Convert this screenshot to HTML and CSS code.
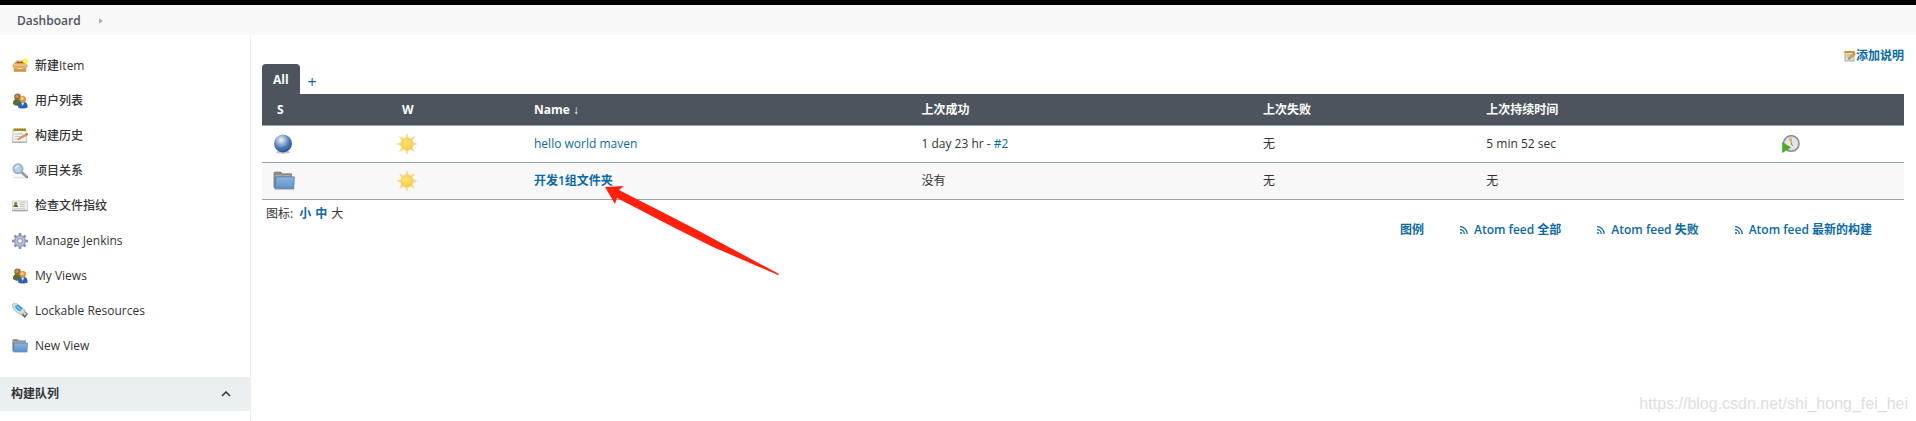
FILE: index.html
```html
<!DOCTYPE html>
<html lang="zh-CN">
<head>
  <meta charset="UTF-8" />
  <meta name="viewport" content="width=device-width, initial-scale=1" />
  <title>Dashboard [Jenkins]</title>
  <link rel="stylesheet" href="styles.css">
</head>
<body>

  <!-- Shared icons -->
  <svg class="sprite" aria-hidden="true">
    <defs>
      <linearGradient id="boxFill" x1="0" y1="0" x2="0" y2="1">
        <stop offset="0" stop-color="#f6cf8d" /><stop offset="1" stop-color="#d4883a" />
      </linearGradient>
      <linearGradient id="folderFill" x1="0" y1="0" x2="0" y2="1">
        <stop offset="0" stop-color="#8db4de" /><stop offset="1" stop-color="#5c8fc9" />
      </linearGradient>
      <radialGradient id="ballFill" cx="0.4" cy="0.3" r="0.7">
        <stop offset="0" stop-color="#f2f5ee" /><stop offset="0.3" stop-color="#a5bdd8" />
        <stop offset="0.65" stop-color="#4a79b5" /><stop offset="1" stop-color="#2a5592" />
      </radialGradient>
      <radialGradient id="sunFill" cx="0.45" cy="0.4" r="0.6">
        <stop offset="0" stop-color="#ffe680" /><stop offset="1" stop-color="#fccb3c" />
      </radialGradient>
    </defs>
    <symbol id="icon-box" viewBox="0 0 16 16">
      <path d="M2.500 5.500 4.500 3h7l2 2.500z" fill="#e5ae62" stroke="#c07a2c" stroke-width=".6" />
      <path d="M4 5.200h8L11 4H5z" fill="#9c6428" />
      <path d="M2 6.500h12V13.500H2z" fill="url(#boxFill)" stroke="#d09450" stroke-width=".6" />
      <path d="M.3 8.500 2.300 5.500h11.400l2 3z" fill="#f0bd7c" stroke="#cf8d42" stroke-width=".5" />
      <path d="M6 10.500h4" stroke="#fbe2b5" stroke-width="1" />
      <circle cx="13.500" cy="3" r="2.500" fill="#fff226" />
      <circle cx="13.500" cy="3" r="1" fill="#fffcb8" />
    </symbol>
    <symbol id="icon-users" viewBox="0 0 16 16">
      <path d="M1 11c-.4-3 1-5 4-5s5 2 4.500 6C7 13.200 3 13 1 11z" fill="#55702b" />
      <circle cx="5.500" cy="3.800" r="3.300" fill="#9a6732" />
      <circle cx="5" cy="3.200" r="1.700" fill="#c39359" />
      <path d="M6.200 14.500c-.4-4 1-5.700 4.300-5.700s5.500 1.700 5 5.700c-2.500 1.300-7 1.300-9.300 0z" fill="#2e62ab" />
      <path d="m9.200 9.500 1.500 3.500 1.500-3.500z" fill="#e7eef8" />
      <circle cx="10.800" cy="6.300" r="3.200" fill="#e0933b" />
      <circle cx="10.200" cy="5.600" r="1.700" fill="#f6c686" />
    </symbol>
    <symbol id="icon-notepad" viewBox="0 0 16 16">
      <path d="M1 2h13l.8 12.500H.5z" fill="#f0f0ed" stroke="#b4b5b0" stroke-width=".7" />
      <path d="M.5 13.500h14.300v1.500H.5z" fill="#b2b3af" />
      <path d="M1.500.5h12.500v2.500H1.500z" fill="#a99330" />
      <path d="M2.500 1.200h1m1.500 0h1m1.500 0h1m1.500 0h1m1.500 0h1" stroke="#645315" stroke-width=".8" />
      <path d="M3 6h8M3 8.500h5M3 11h3" stroke="#b9bbb7" stroke-width=".8" />
      <path d="m6 11.500 1.400-2L14 6l1.700-.3-.6 1.600-6.600 3.500z" fill="#dc924a" stroke="#9b5b27" stroke-width=".3" />
      <path d="m14 6 1.700-.5-.5 2z" fill="#bd3232" />
      <path d="m5.800 11.800.6-1 .6.800z" fill="#333" />
    </symbol>
    <symbol id="icon-search" viewBox="0 0 16 16">
      <ellipse cx="7.500" cy="14.500" rx="6.500" ry="1" fill="#e6e6e6" />
      <path d="m10 9.500 5 4.500" stroke="#858988" stroke-width="2.600" stroke-linecap="round" />
      <path d="m10.500 9.300 4.700 4" stroke="#c0c3c1" stroke-width="1" />
      <circle cx="6" cy="5.800" r="4.900" fill="#bdd8f3" stroke="#a9aeb2" stroke-width="1.300" />
      <circle cx="6" cy="5.800" r="3.900" fill="#b5d2f0" stroke="#7facd9" stroke-width=".6" />
      <path d="M3.500 5.500c.3-1.800 1.500-2.600 3.300-2.500" fill="none" stroke="#eef6ff" stroke-width="1.400" />
    </symbol>
    <symbol id="icon-card" viewBox="0 0 16 16">
      <path d="M.5 3h15v10H.5z" fill="#efefed" stroke="#c8cac6" stroke-width=".8" />
      <path d="M.5 12.600h15" stroke="#9b9d99" stroke-width="1" />
      <path d="M1.500 9c0-2 1-2.500 2.200-2.500S6 7 6 9z" fill="#55702b" />
      <circle cx="3.700" cy="5.500" r="1.500" fill="#b56d27" />
      <path d="M8 4.800h5.500M8 6.700h4.500M8 8.500h5M2 10.800h11.500" stroke="#b5b6b3" stroke-width=".7" />
    </symbol>
    <symbol id="icon-gear" viewBox="0 0 16 16">
      <g stroke="#8792b8" stroke-width="2.600">
        <path d="M8 0v16M0 8h16M2.500 2.500l11 11M13.500 2.500l-11 11" />
      </g>
      <circle cx="8" cy="8" r="5.600" fill="#a7b1d0" stroke="#7f8bb3" stroke-width=".6" />
      <circle cx="8" cy="8" r="3.900" fill="none" stroke="#bdc5de" stroke-width="1" />
      <circle cx="8" cy="8" r="2.300" fill="#fff" stroke="#7883a8" stroke-width=".7" />
    </symbol>
    <symbol id="icon-usb" viewBox="0 0 16 16">
      <path d="m8.800 11 3.200-3.600 4 3.400-3.200 4.200z" fill="#5c6062" />
      <path d="m10.500 10.500 1.800-1.900 2.400 1.900-1.700 2.200z" fill="#cfd3d4" />
      <path d="M.2 1.800C.8.300 3-.2 4.500.4l8.300 6.200c.8 1-1.700 5-3.700 5.100C5.500 11 0 5 .2 1.800z" fill="#d4dbdf" stroke="#929b9f" stroke-width=".6" />
      <path d="M3.200 3.200c1-1.700 2.800-1.900 3.800-1.100l3 2.700c.7 1-.9 3.600-2.400 3.300C6 7.500 2.700 5 3.200 3.200z" fill="#35a8da" />
      <path d="m4.800 3.500 3.500 2.800" stroke="#a4e3fa" stroke-width="1" />
    </symbol>
    <symbol id="icon-folder" viewBox="0 0 16 16">
      <path d="M.7 2.200 1.200 1.500h4.500l1 1.200h6.800v10H.7z" fill="#8b8d88" stroke="#737570" stroke-width=".5" />
      <path d="M1.300 3.500h11.500V5H1.300z" fill="#a6a8a3" />
      <path d="M2.200 5h13.300l-.5 9H1.500z" fill="url(#folderFill)" stroke="#4879b2" stroke-width=".6" />
      <path d="M.7 14.300h14.800" stroke="#d2d4d2" stroke-width=".7" />
    </symbol>
    <symbol id="icon-ball" viewBox="0 0 20 20">
      <ellipse cx="10" cy="18.200" rx="7" ry="1.600" fill="#c2c5c9" />
      <circle cx="10" cy="9.500" r="9" fill="url(#ballFill)" />
    </symbol>
    <symbol id="icon-sun" viewBox="0 0 22 22">
      <path d="m11 0 2 6H9zM11 22l2-6H9zM0 11l6-2v4zM22 11l-6-2v4zM3 3l6 3-3 3zM19 3l-6 3 3 3zM3 19l6-3-3-3zM19 19l-6-3 3-3z" fill="#fbd88c" />
      <circle cx="11" cy="11" r="6" fill="url(#sunFill)" stroke="#fac64b" stroke-width=".6" />
    </symbol>
    <symbol id="icon-clock" viewBox="0 0 18 18">
      <circle cx="9.300" cy="8.500" r="7.800" fill="#e6e6e4" stroke="#8584a5" stroke-width="1.500" />
      <circle cx="9.300" cy="8.500" r="6.500" fill="none" stroke="#c8c8ca" stroke-width=".8" />
      <path d="m6.500 4 3-1.500.9 5.500-2-1.500z" fill="#e0b238" />
      <path d="m9 7.500 1.500 3.500" stroke="#777" stroke-width="1" />
      <path d="M.5 7.500 8.500 12.500.5 17.500z" fill="#4dae20" stroke="#4a9a26" stroke-width=".6" />
    </symbol>
    <symbol id="icon-edit" viewBox="0 0 12 12">
      <path d="M1 1.500h9v9.500H1z" fill="#dededa" stroke="#90918c" stroke-width=".7" />
      <path d="M.5 1h10v2H.5z" fill="#c49a25" />
      <path d="M2.500 5h5M2.500 7h3" stroke="#a0a19d" stroke-width=".7" />
      <path d="m4.300 9.300.9-2L10 2.700l1.500 1.400-5 4.400z" fill="#eda937" stroke="#87551b" stroke-width=".5" />
    </symbol>
    <symbol id="icon-feed" viewBox="0 0 8 8">
      <path d="M0 .7A7.300 7.300 0 0 1 7.300 8M0 3.700A4.300 4.300 0 0 1 4.300 8" fill="none" stroke="currentColor" stroke-width="1.300" />
      <circle cx="1" cy="7" r="1" fill="currentColor" />
    </symbol>
  </svg>

  <header class="page-header"></header>

  <nav class="breadcrumbs">
    <a href="#">Dashboard</a>
    <svg class="breadcrumb-arrow" viewBox="0 0 4 6"><path d="M0 0l4 3-4 3z" fill="#b3b3b3" /></svg>
  </nav>

  <div class="page-body">
    <aside class="side-panel">
      <nav class="tasks">
        <a href="#"><svg><use href="#icon-box" /></svg>新建Item</a>
        <a href="#"><svg><use href="#icon-users" /></svg>用户列表</a>
        <a href="#"><svg><use href="#icon-notepad" /></svg>构建历史</a>
        <a href="#"><svg><use href="#icon-search" /></svg>项目关系</a>
        <a href="#"><svg><use href="#icon-card" /></svg>检查文件指纹</a>
        <a href="#"><svg><use href="#icon-gear" /></svg>Manage Jenkins</a>
        <a href="#"><svg><use href="#icon-users" /></svg>My Views</a>
        <a href="#"><svg><use href="#icon-usb" /></svg>Lockable Resources</a>
        <a href="#"><svg><use href="#icon-folder" /></svg>New View</a>
      </nav>
      <div class="pane-header">
        <span>构建队列</span>
        <button type="button" class="collapse" aria-label="collapse">
          <svg viewBox="0 0 10 6"><path d="M1 5l4-4 4 4" fill="none" stroke="#333" stroke-width="1.500" /></svg>
        </button>
      </div>
    </aside>

    <main class="main-panel">
      <div class="description">
        <a href="#"><svg><use href="#icon-edit" /></svg>添加说明</a>
      </div>

      <div class="tab-bar">
        <a href="#" class="tab active">All</a>
        <a href="#" class="tab add">+</a>
      </div>

      <table class="projects">
        <colgroup>
          <col class="col-status" />
          <col class="col-weather" />
          <col class="col-name" />
          <col class="col-success" />
          <col class="col-failure" />
          <col class="col-duration" />
          <col class="col-build" />
        </colgroup>
        <thead>
          <tr>
            <th><a href="#">S</a></th>
            <th><a href="#">W</a></th>
            <th><a href="#">Name <span class="sort">↓</span></a></th>
            <th><a href="#">上次成功</a></th>
            <th><a href="#">上次失败</a></th>
            <th><a href="#">上次持续时间</a></th>
            <th></th>
          </tr>
        </thead>
        <tbody>
          <tr>
            <td><svg class="status"><use href="#icon-ball" /></svg></td>
            <td><svg class="weather"><use href="#icon-sun" /></svg></td>
            <td><a href="#" class="job">hello world maven</a></td>
            <td>1 day 23 hr - <a href="#" class="job">#2</a></td>
            <td>无</td>
            <td>5 min 52 sec</td>
            <td><a href="#" aria-label="build"><svg class="build"><use href="#icon-clock" /></svg></a></td>
          </tr>
          <tr>
            <td><svg class="status folder-icon"><use href="#icon-folder" /></svg></td>
            <td><svg class="weather"><use href="#icon-sun" /></svg></td>
            <td><a href="#" class="folder">开发1组文件夹</a></td>
            <td>没有</td>
            <td>无</td>
            <td>无</td>
            <td></td>
          </tr>
        </tbody>
      </table>

      <div class="icon-size"><span>图标:</span><a href="#">小</a><a href="#">中</a><span>大</span></div>

      <div class="feeds">
        <a href="#">图例</a>
        <a href="#"><svg><use href="#icon-feed" /></svg>Atom feed 全部</a>
        <a href="#"><svg><use href="#icon-feed" /></svg>Atom feed 失败</a>
        <a href="#"><svg><use href="#icon-feed" /></svg>Atom feed 最新的构建</a>
      </div>
    </main>
  </div>

  <!-- Annotation over the table -->
  <svg class="pointer" viewBox="0 0 174 88">
    <path d="M0 0 19-1 14 3 65 29 94 44 174 87 173 88 108 60 68 40 12 11 10 17z" fill="#ff2010" />
  </svg>

  <div class="watermark">https://blog.csdn.net/shi_hong_fei_hei</div>

</body>
</html>
```
FILE: styles.css
```css
* {
  box-sizing: border-box;
}
body {
  margin: 0;
  min-height: 100vh;
  display: flex;
  flex-direction: column;
  position: relative;
  overflow: hidden;
  background: #fff;
  color: #333;
  font-family: "Open Sans", "Noto Sans CJK SC", sans-serif;
  font-size: 12px;
  line-height: 18px;
}
a {
  color: #0b6aa2;
  text-decoration: none;
}
svg {
  display: block;
  flex: none;
}
.sprite {
  position: absolute;
  width: 0;
  height: 0;
}
.page-header {
  height: 5px;
  background: #000;
}
.breadcrumbs {
  display: flex;
  align-items: center;
  gap: 18px;
  height: 30px;
  padding: 1px 17px 0;
  background: #f8f8f8;
}
.breadcrumbs a {
  color: #4d545d;
  font-weight: 600;
}
.breadcrumb-arrow {
  width: 4px;
  height: 6px;
}
.page-body {
  display: flex;
  flex: 1;
}

/* Side panel */
.side-panel {
  width: 251px;
  flex: none;
  border-right: 1px solid #eaeff2;
}
.tasks {
  padding: 13px 12px 14px;
}
.tasks a {
  display: flex;
  align-items: center;
  gap: 7px;
  height: 35px;
  color: #333;
  font-weight: 500;
}
.tasks svg {
  width: 16px;
  height: 16px;
}
.pane-header {
  display: flex;
  align-items: center;
  justify-content: space-between;
  height: 34px;
  padding: 0 17px 0 11px;
  background: #eaeff2;
  font-weight: 600;
}
.collapse {
  padding: 2px;
  border: 0;
  background: none;
}
.collapse svg {
  width: 10px;
  height: 6px;
}

/* Main panel */
.main-panel {
  flex: 1;
  padding: 12px 12px 0 11px;
}
.description {
  display: flex;
  justify-content: flex-end;
  height: 17px;
}
.description a {
  display: flex;
  align-items: center;
  font-weight: 600;
}
.description svg {
  width: 12px;
  height: 12px;
}
.tab-bar {
  display: flex;
  height: 30px;
}
.tab {
  padding: 7px 11px;
  font-weight: 700;
}
.tab.active {
  border-radius: 4px 4px 0 0;
  background: #4d545d;
  color: #fff;
}
.tab.add {
  padding: 9px 8px;
  font-size: 16px;
  font-weight: 400;
}
.projects {
  width: 100%;
  border-collapse: collapse;
  table-layout: fixed;
}
.projects tr {
  border-bottom: 1px solid #98a4ad;
}
.projects th {
  height: 31px;
  padding: 2px 8px 0;
  background: #4d545d;
  text-align: left;
  font-weight: 700;
}
.projects th a {
  color: #fff;
}
.sort {
  font-family: "Liberation Sans", Arial, sans-serif;
}
.projects td {
  height: 37px;
  padding: 0 8px;
}
.projects tbody tr:nth-child(even) {
  background: #f8f8f8;
}
.projects th:first-child {
  padding-left: 15px;
}
.projects td:first-child {
  padding-left: 11px;
}
.projects th:nth-child(2) {
  padding-left: 14px;
}
.projects .job {
  font-weight: 500;
}
.projects .folder {
  font-weight: 600;
}
.col-status {
  width: 126px;
}
.col-weather {
  width: 138px;
}
.col-name {
  width: 23.6%;
}
.col-success {
  width: 20.8%;
}
.col-failure {
  width: 13.6%;
}
.col-duration {
  width: 18%;
}
.status {
  width: 20px;
  height: 20px;
}
.status.folder-icon {
  width: 22px;
  height: 22px;
}
.weather {
  width: 22px;
  height: 22px;
}
.build {
  width: 18px;
  height: 18px;
}
.icon-size {
  display: flex;
  gap: 4px;
  padding: 6px 4px 0;
  line-height: 16px;
}
.icon-size span:first-child {
  padding-right: 2px;
}
.icon-size a {
  font-weight: 700;
}
.feeds {
  display: flex;
  justify-content: flex-end;
  gap: 36px;
  padding-right: 32px;
  line-height: 16px;
}
.feeds a {
  display: flex;
  align-items: center;
  gap: 6px;
  font-weight: 600;
}
.feeds svg {
  width: 8px;
  height: 8px;
}

/* Overlays */
.pointer {
  position: absolute;
  left: 605px;
  top: 187px;
  width: 174px;
  height: 88px;
  overflow: visible;
}
.watermark {
  position: absolute;
  right: 8px;
  bottom: 8px;
  color: #dedede;
  font-family: "Liberation Sans", Arial, sans-serif;
  font-size: 16px;
}
```
